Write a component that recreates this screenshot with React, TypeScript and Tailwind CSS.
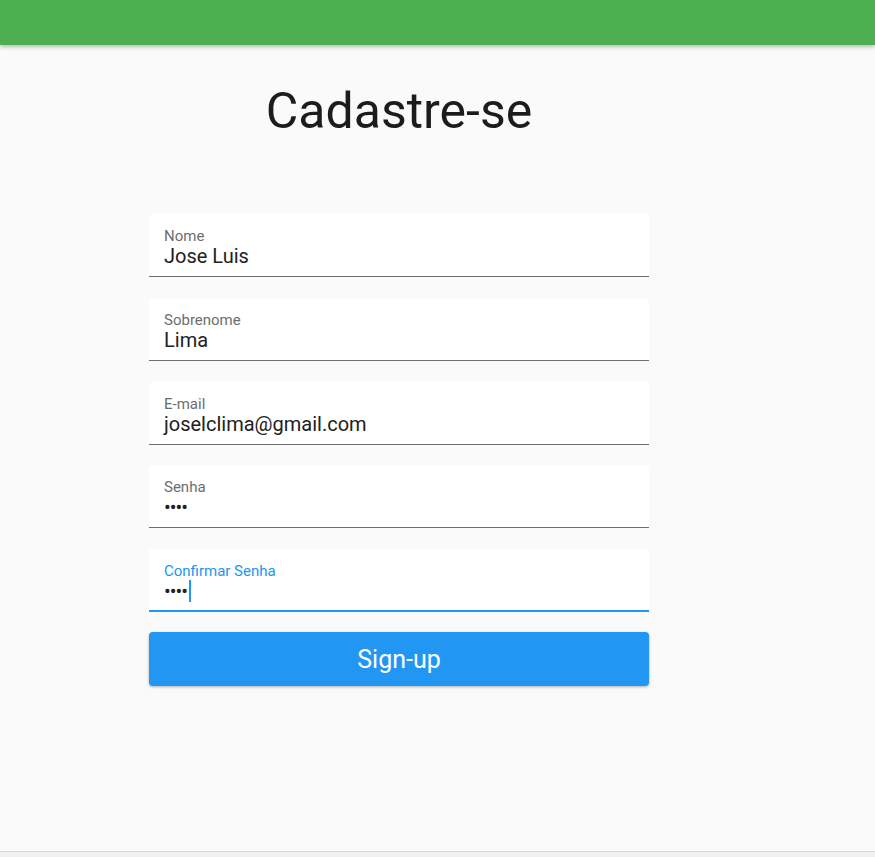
import React from "react";

const font = { fontFamily: "Roboto, 'Noto Sans', sans-serif" };

function Field({
  label,
  value,
  password,
  focused,
}: {
  label: string;
  value: string;
  password?: boolean;
  focused?: boolean;
}) {
  return (
    <div
      className={
        "box-border h-[63px] w-full rounded-t-[4px] bg-white pl-[15px] pt-[14px] " +
        (focused ? "border-b-2 border-[#2196f3]" : "border-b border-[#6e6e6e]")
      }
    >
      <div
        className={
          "text-[15px] leading-[16px] " +
          (focused ? "text-[#2196f3]" : "text-[#6d6d6d]")
        }
      >
        {label}
      </div>
      <div className="mt-[1px] flex items-center text-[20px] leading-[22px] text-[#212121]">
        {password ? (
          <span className="text-[20px] leading-[22px] tracking-[-1px]">{value}</span>
        ) : (
          <span>{value}</span>
        )}
        {focused && <span className="ml-[2px] h-[22px] w-[2px] bg-[#2196f3]" />}
      </div>
    </div>
  );
}

export default function App() {
  return (
    <div className="flex h-[857px] w-full flex-col bg-[#fafafa]" style={font}>
      <div className="relative z-10 h-[45px] w-full shrink-0 bg-[#4caf50] shadow-[0_2px_4px_rgba(0,0,0,0.25)]" />
      <div className="flex flex-1 flex-col">
        <div className="ml-[149px] flex w-[500px] flex-col">
          <h1 className="mt-[41px] text-center text-[50px] font-normal leading-[50px] text-[#1c1c1c]">
            Cadastre-se
          </h1>
          <div className="mt-[78px] flex flex-col gap-[20.75px]">
            <Field label="Nome" value="Jose Luis" />
            <Field label="Sobrenome" value="Lima" />
            <Field label="E-mail" value="joselclima@gmail.com" />
            <Field label="Senha" value="••••" password />
            <Field label="Confirmar Senha" value="••••" password focused />
          </div>
          <button className="mt-[20px] h-[54px] w-full rounded-[4px] bg-[#2196f3] pt-[2px] text-[25px] text-white shadow-[0_1px_3px_rgba(0,0,0,0.3)]">
            Sign-up
          </button>
        </div>
      </div>
      <div className="h-[6px] w-full shrink-0 border-t border-[#d9d9d9] bg-[#f0f0f0]" />
    </div>
  );
}
